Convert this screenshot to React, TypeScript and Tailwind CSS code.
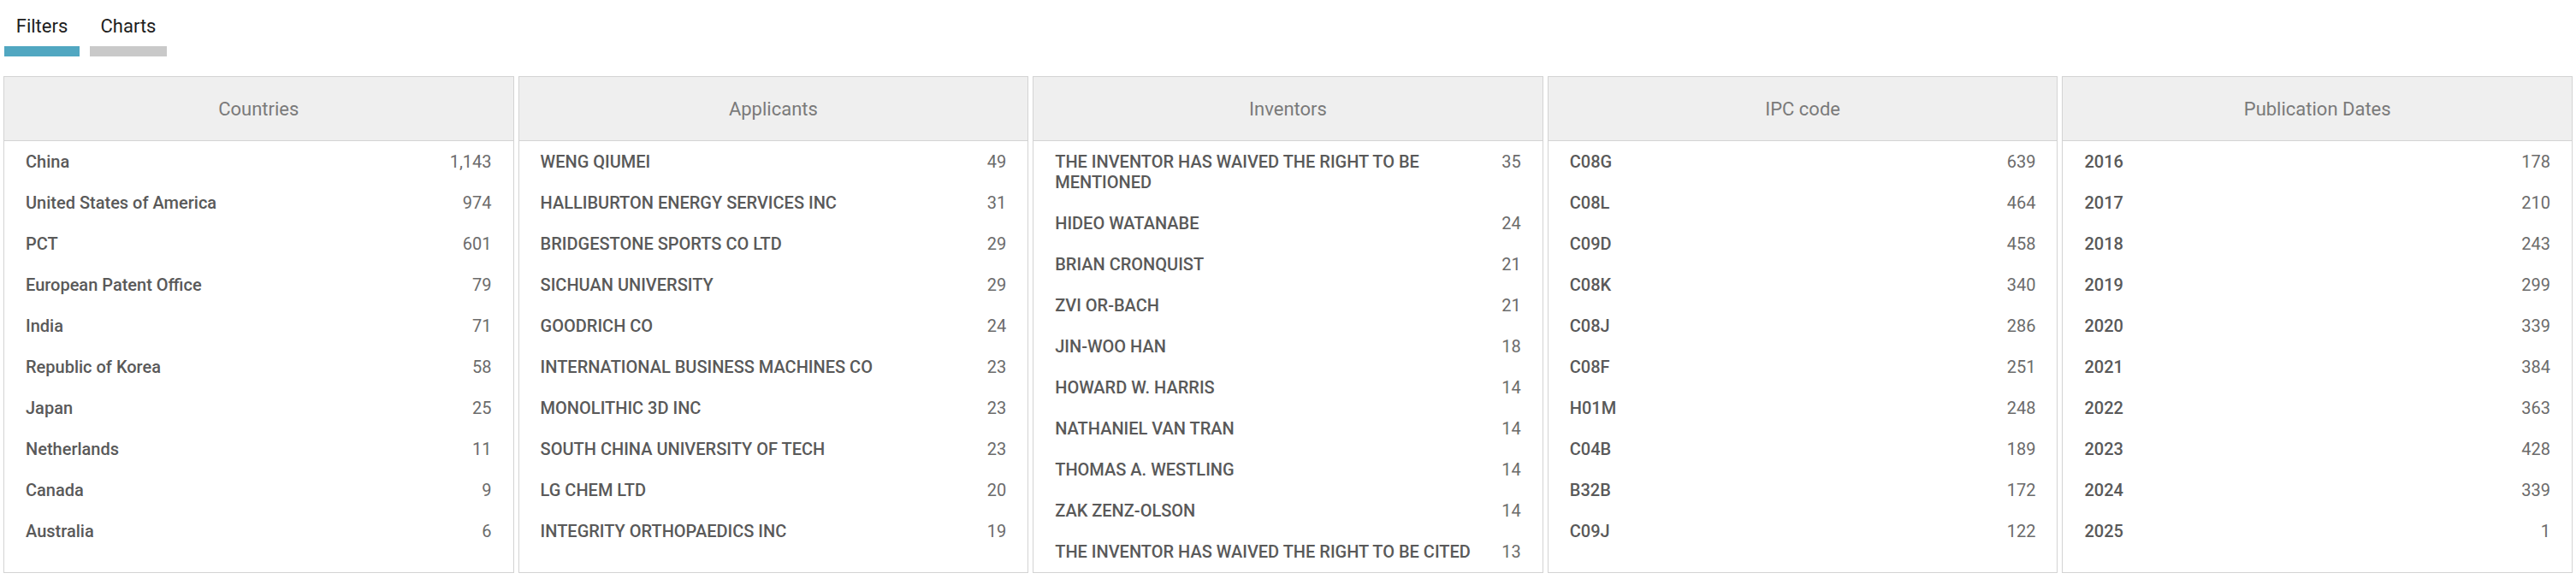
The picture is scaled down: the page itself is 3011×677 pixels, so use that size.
import React from "react";

interface Row {
  label: string;
  count: string;
}

interface Panel {
  title: string;
  rows: Row[];
}

// Filter panels shown under the "Filters" tab
const panels: Panel[] = [
  {
    title: "Countries",
    rows: [
      { label: "China", count: "1,143" },
      { label: "United States of America", count: "974" },
      { label: "PCT", count: "601" },
      { label: "European Patent Office", count: "79" },
      { label: "India", count: "71" },
      { label: "Republic of Korea", count: "58" },
      { label: "Japan", count: "25" },
      { label: "Netherlands", count: "11" },
      { label: "Canada", count: "9" },
      { label: "Australia", count: "6" },
    ],
  },
  {
    title: "Applicants",
    rows: [
      { label: "WENG QIUMEI", count: "49" },
      { label: "HALLIBURTON ENERGY SERVICES INC", count: "31" },
      { label: "BRIDGESTONE SPORTS CO LTD", count: "29" },
      { label: "SICHUAN UNIVERSITY", count: "29" },
      { label: "GOODRICH CO", count: "24" },
      { label: "INTERNATIONAL BUSINESS MACHINES CO", count: "23" },
      { label: "MONOLITHIC 3D INC", count: "23" },
      { label: "SOUTH CHINA UNIVERSITY OF TECH", count: "23" },
      { label: "LG CHEM LTD", count: "20" },
      { label: "INTEGRITY ORTHOPAEDICS INC", count: "19" },
    ],
  },
  {
    title: "Inventors",
    rows: [
      { label: "THE INVENTOR HAS WAIVED THE RIGHT TO BE MENTIONED", count: "35" },
      { label: "HIDEO WATANABE", count: "24" },
      { label: "BRIAN CRONQUIST", count: "21" },
      { label: "ZVI OR-BACH", count: "21" },
      { label: "JIN-WOO HAN", count: "18" },
      { label: "HOWARD W. HARRIS", count: "14" },
      { label: "NATHANIEL VAN TRAN", count: "14" },
      { label: "THOMAS A. WESTLING", count: "14" },
      { label: "ZAK ZENZ-OLSON", count: "14" },
      { label: "THE INVENTOR HAS WAIVED THE RIGHT TO BE CITED", count: "13" },
    ],
  },
  {
    title: "IPC code",
    rows: [
      { label: "C08G", count: "639" },
      { label: "C08L", count: "464" },
      { label: "C09D", count: "458" },
      { label: "C08K", count: "340" },
      { label: "C08J", count: "286" },
      { label: "C08F", count: "251" },
      { label: "H01M", count: "248" },
      { label: "C04B", count: "189" },
      { label: "B32B", count: "172" },
      { label: "C09J", count: "122" },
    ],
  },
  {
    title: "Publication Dates",
    rows: [
      { label: "2016", count: "178" },
      { label: "2017", count: "210" },
      { label: "2018", count: "243" },
      { label: "2019", count: "299" },
      { label: "2020", count: "339" },
      { label: "2021", count: "384" },
      { label: "2022", count: "363" },
      { label: "2023", count: "428" },
      { label: "2024", count: "339" },
      { label: "2025", count: "1" },
    ],
  },
];

function FilterPanel({ title, rows }: Panel) {
  return (
    <div className="border border-[#d3d3d3] bg-white flex flex-col">
      <div className="h-[75px] flex items-center justify-center bg-[#efefef] border-b border-[#d3d3d3] text-[22px] text-[#7a7a7a]">
        {title}
      </div>
      <ul>
        {rows.map((row) => (
          <li key={row.label} className="flex items-start justify-between gap-4 pl-[25px] pr-[25px] py-3 leading-6 text-[20px]">
            <span className="font-medium text-[#595959]">{row.label}</span>
            <span className="text-[#6b6b6b] text-right shrink-0">{row.count}</span>
          </li>
        ))}
      </ul>
    </div>
  );
}

export default function App() {
  return (
    <div className="bg-white min-h-[677px] font-['Roboto','Liberation_Sans',sans-serif]">
      {/* Tabs */}
      <div className="flex gap-3 pl-[5px] pt-[18px]">
        <div className="flex flex-col items-center w-[88px]">
          <span className="text-[22px] leading-[26px] text-[#1d1d1d]">Filters</span>
          <div className="mt-[10px] h-3 w-full bg-[#51a7c1]" />
        </div>
        <div className="flex flex-col items-center w-[90px]">
          <span className="text-[22px] leading-[26px] text-[#1d1d1d]">Charts</span>
          <div className="mt-[10px] h-3 w-full bg-[#c9c9c9]" />
        </div>
      </div>

      {/* Panels */}
      <div className="grid grid-cols-5 gap-[5px] px-[4px] mt-[23px]">
        {panels.map((p) => (
          <FilterPanel key={p.title} title={p.title} rows={p.rows} />
        ))}
      </div>
    </div>
  );
}
